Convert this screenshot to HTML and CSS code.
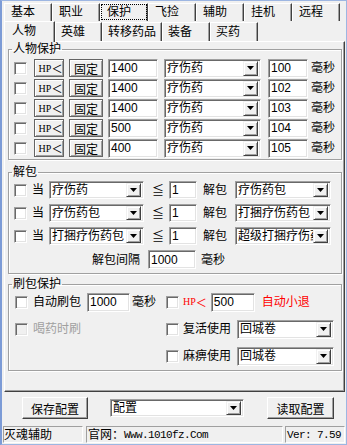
FILE: index.html
```html
<!DOCTYPE html>
<html>
<head>
<meta charset="utf-8">
<link rel="stylesheet" href="styles.css">
</head>
<body>
<div class="window">
  <div class="tabrow row1">
    <div class="tab">基本</div>
    <div class="tab">职业</div>
    <div class="tab focus">保护</div>
    <div class="tab">飞捡</div>
    <div class="tab">辅助</div>
    <div class="tab">挂机</div>
    <div class="tab">远程</div>
  </div>
  <div class="tabrow row2">
    <div class="tab2 sel">人物</div>
    <div class="tab2 t47">英雄</div>
    <div class="tab2 t60">转移药品</div>
    <div class="tab2">装备</div>
    <div class="tab2">买药</div>
  </div>
  <div class="panel">
    <fieldset class="group g1">
      <legend>人物保护</legend>
      <div class="prow">
        <span class="chk"></span><span class="btn hp">HP<span class="lt">＜</span></span><span class="btn fix">固定</span><span class="edit e50">1400</span><span class="combo c97"><span class="val">疗伤药</span><span class="drop"></span></span><span class="edit e40">100</span><span class="lbl">毫秒</span>
      </div>
      <div class="prow">
        <span class="chk"></span><span class="btn hp">HP<span class="lt">＜</span></span><span class="btn fix">固定</span><span class="edit e50">1400</span><span class="combo c97"><span class="val">疗伤药</span><span class="drop"></span></span><span class="edit e40">102</span><span class="lbl">毫秒</span>
      </div>
      <div class="prow">
        <span class="chk"></span><span class="btn hp">HP<span class="lt">＜</span></span><span class="btn fix">固定</span><span class="edit e50">1400</span><span class="combo c97"><span class="val">疗伤药</span><span class="drop"></span></span><span class="edit e40">103</span><span class="lbl">毫秒</span>
      </div>
      <div class="prow">
        <span class="chk"></span><span class="btn hp">HP<span class="lt">＜</span></span><span class="btn fix">固定</span><span class="edit e50">500</span><span class="combo c97"><span class="val">疗伤药</span><span class="drop"></span></span><span class="edit e40">104</span><span class="lbl">毫秒</span>
      </div>
      <div class="prow">
        <span class="chk"></span><span class="btn hp">HP<span class="lt">＜</span></span><span class="btn fix">固定</span><span class="edit e50">400</span><span class="combo c97"><span class="val">疗伤药</span><span class="drop"></span></span><span class="edit e40">105</span><span class="lbl">毫秒</span>
      </div>
    </fieldset>

    <fieldset class="group g2">
      <legend>解包</legend>
      <div class="urow">
        <span class="chk"></span><span class="lbl">当</span><span class="combo c95"><span class="val">疗伤药</span><span class="drop"></span></span><span class="lbl le">≦</span><span class="edit e28">1</span><span class="lbl">解包</span><span class="combo c96"><span class="val">疗伤药包</span><span class="drop"></span></span>
      </div>
      <div class="urow">
        <span class="chk"></span><span class="lbl">当</span><span class="combo c95"><span class="val">疗伤药包</span><span class="drop"></span></span><span class="lbl le">≦</span><span class="edit e28">1</span><span class="lbl">解包</span><span class="combo c96"><span class="val">打捆疗伤药包</span><span class="drop"></span></span>
      </div>
      <div class="urow">
        <span class="chk"></span><span class="lbl">当</span><span class="combo c95"><span class="val">打捆疗伤药包</span><span class="drop"></span></span><span class="lbl le">≦</span><span class="edit e28">1</span><span class="lbl">解包</span><span class="combo c96"><span class="val">超级打捆疗伤药包</span><span class="drop"></span></span>
      </div>
      <div class="irow">
        <span class="lbl">解包间隔</span><span class="edit e48">1000</span><span class="lbl ms">毫秒</span>
      </div>
    </fieldset>

    <fieldset class="group g3">
      <legend>刷包保护</legend>
      <div class="sgrid">
        <div class="cell">
          <span class="chk ml1"></span><span class="lbl ml5">自动刷包</span><span class="edit e43 ml6">1000</span><span class="lbl ml2">毫秒</span>
        </div>
        <div class="cell">
          <span class="chk"></span><span class="red hpred ml4">HP<span class="lt">＜</span></span><span class="edit e44 ml7">500</span><span class="red ml7">自动小退</span>
        </div>
        <div class="cell">
          <span class="chk dis ml1"></span><span class="lbl gray ml5">喝药时刷</span>
        </div>
        <div class="cell">
          <span class="chk"></span><span class="lbl ml4">复活使用</span><span class="combo c97 ml6"><span class="val">回城卷</span><span class="drop"></span></span>
        </div>
        <div class="cell"></div>
        <div class="cell">
          <span class="chk"></span><span class="lbl ml4">麻痹使用</span><span class="combo c97 ml6"><span class="val">回城卷</span><span class="drop"></span></span>
        </div>
      </div>
    </fieldset>
  </div>

  <div class="bottombar">
    <span class="pbtn save">保存配置</span>
    <span class="combo cfg"><span class="val">配置</span><span class="drop"></span></span>
    <span class="pbtn load">读取配置</span>
  </div>

  <div class="statusbar">
    <span class="sp sp1">灭魂辅助</span>
    <span class="sp sp2">官网：<span class="mono">Www.1010fz.Com</span></span>
    <span class="sp sp3"><span class="mono">Ver: 7.59</span></span>
  </div>
</div>
</body>
</html>
```

FILE: styles.css
```css
* { box-sizing: border-box; }
html, body { margin: 0; padding: 0; }
body {
  width: 347px;
  height: 445px;
  overflow: hidden;
  background: #f0f0f0;
  font-family: "Liberation Sans", "Noto Sans CJK SC", sans-serif;
  font-size: 12px;
  color: #000;
}
.window {
  width: 347px;
  height: 445px;
  border: 1px solid #9db6e2;
  border-left: 2px solid #7c9bd6;
  display: flex;
  flex-direction: column;
  background: #f0f0f0;
}

/* tabs */
.tabrow { display: flex; margin-left: 2px; }
.row1 { margin-top: 2px; height: 18px; }
.row2 { height: 20px; position: relative; z-index: 2; }
.tab {
  width: 48px;
  height: 18px;
  padding-left: 6px;
  line-height: 16px;
  border-left: 1px solid #fff;
  border-top: 1px solid #fff;
  border-right: 1px solid #404040;
  box-shadow: inset -1px 0 #a0a0a0;
}
.tab.focus { outline: 1px dotted #000; outline-offset: -2px; }
.tab2 {
  width: 48px;
  padding-left: 5px;
  line-height: 18px;
  border-left: 1px solid #fff;
  border-top: 1px solid #fff;
  border-right: 1px solid #404040;
  box-shadow: inset -1px 0 #a0a0a0;
  margin-top: 1px;
  height: 19px;
}
.tab2.t47 { width: 47px; }
.tab2.t60 { width: 60px; }
.tab2.sel {
  width: 51px;
  height: 21px;
  margin-top: 0;
  padding-left: 7px;
  background: #f0f0f0;
  margin-bottom: -1px;
}

/* panel */
.panel {
  flex: none;
  height: 351px;
  margin: 0 1px 0 2px;
  border: 1px solid;
  border-color: #fff #404040 #404040 #fff;
  box-shadow: inset -1px -1px #a0a0a0;
  padding: 1px 2px 0 3px;
  display: flex;
  flex-direction: column;
}
.group {
  margin: 0;
  min-width: 0;
  border: 1px solid #a0a0a0;
  box-shadow: inset 1px 1px #fff, 1px 1px #fff;
  padding: 0 0 0 5px;
}
.group legend {
  padding: 0 1px;
  margin-left: -2px;
  line-height: 13px;
  height: 13px;
  font-size: 12px;
}
.g1 { padding-top: 2px; padding-bottom: 1px; }
.g2 { margin-top: 6px; padding-top: 2px; padding-bottom: 4px; }
.g3 { margin-top: 4px; padding-top: 1px; padding-bottom: 4px; }

.prow {
  display: grid;
  grid-template-columns: 20px 35px 39px 56px 104px 43px auto;
  height: 20px;
  align-items: center;
  justify-items: start;
}
.urow {
  display: grid;
  grid-template-columns: 18px 17px 106px 14px 34px 32px auto;
  height: 18px;
  margin-bottom: 5px;
  align-items: center;
  justify-items: start;
}
.irow {
  display: flex;
  align-items: center;
  height: 19px;
  padding-left: 78px;
}
.irow .edit { margin-left: 8px; }
.irow .ms { margin-left: 5px; }

.sgrid {
  display: grid;
  grid-template-columns: 152px auto;
  grid-auto-rows: 20px;
  row-gap: 7px;
}
.cell { display: flex; align-items: center; }

.ml1 { margin-left: 1px; }
.ml2 { margin-left: 2px; }
.ml4 { margin-left: 4px; }
.ml5 { margin-left: 5px; }
.ml6 { margin-left: 6px; }
.ml7 { margin-left: 7px; }

.lbl { white-space: nowrap; line-height: 14px; }
.le {
  font-family: "Noto Sans CJK SC", sans-serif;
  font-size: 12px;
  margin-left: -3px;
}
.gray { color: #a0a0a0; }
.red { color: #f00; white-space: nowrap; line-height: 14px; }
.hpred { font-family: "Liberation Serif", serif; font-size: 10px; display: flex; align-items: center; }
.lt {
  font-family: "Noto Sans CJK SC", sans-serif;
  font-size: 11px;
  margin-right: -3px;
}

/* controls */
.chk {
  display: block;
  width: 13px;
  height: 13px;
  background: #fff;
  border: 1px solid;
  border-color: #a0a0a0 #fff #fff #a0a0a0;
  box-shadow: inset 1px 1px #696969, inset -1px -1px #e3e3e3;
}
.chk.dis { background: #f0f0f0; }

.btn {
  display: flex;
  align-items: center;
  justify-content: center;
  height: 18px;
  border: 1px solid #646464;
  box-shadow: inset 1px 1px #fff, inset -1px -1px #a0a0a0;
  background: #f0f0f0;
  white-space: nowrap;
}
.hp { width: 30px; font-family: "Liberation Serif", serif; font-size: 10px; }
.fix { width: 34px; }

.edit {
  display: flex;
  align-items: center;
  height: 19px;
  background: #fff;
  border: 1px solid;
  border-color: #a0a0a0 #fff #fff #a0a0a0;
  box-shadow: inset 1px 1px #696969, inset -1px -1px #e3e3e3;
  padding-left: 2px;
  white-space: nowrap;
}
.e50 { width: 50px; }
.e40 { width: 40px; }
.e28 { width: 28px; height: 18px; }
.e48 { width: 48px; }
.e43 { width: 43px; }
.e44 { width: 44px; }

.combo {
  display: flex;
  align-items: center;
  height: 19px;
  background: #fff;
  border: 1px solid;
  border-color: #a0a0a0 #fff #fff #a0a0a0;
  box-shadow: inset 1px 1px #696969, inset -1px -1px #e3e3e3;
  padding: 1px 2px 1px 2px;
}
.urow .combo { height: 18px; }
.c97 { width: 97px; }
.c95 { width: 95px; }
.c96 { width: 96px; }
.combo .val {
  flex: 1;
  min-width: 0;
  overflow: hidden;
  white-space: nowrap;
  line-height: 14px;
}
.drop {
  flex: none;
  width: 15px;
  height: 15px;
  display: flex;
  align-items: center;
  justify-content: center;
  background: #f0f0f0;
  border: 1px solid;
  border-color: #f0f0f0 #404040 #404040 #f0f0f0;
  box-shadow: inset 1px 1px #fff, inset -1px -1px #a0a0a0;
}
.urow .drop { height: 14px; }
.drop::after {
  content: "";
  width: 7px;
  height: 4px;
  background: #000;
  clip-path: polygon(0 0, 100% 0, 50% 100%);
}

/* bottom bar */
.bottombar {
  flex: none;
  height: 32px;
  display: flex;
  align-items: center;
  padding-left: 20px;
}
.pbtn {
  display: flex;
  align-items: center;
  justify-content: center;
  height: 22px;
  border: 1px solid;
  border-color: #fff #404040 #404040 #fff;
  box-shadow: inset -1px -1px #a0a0a0;
  background: #f0f0f0;
  font-size: 12px;
}
.save { width: 66px; }
.load { width: 67px; margin-left: 23px; }
.cfg { width: 134px; height: 18px; margin-left: 22px; }
.cfg .drop { height: 14px; }

/* status bar */
.statusbar {
  flex: none;
  display: flex;
  padding: 2px 0 0 1px;
}
.sp {
  display: flex;
  align-items: center;
  height: 17px;
  border: 1px solid;
  border-color: #a0a0a0 #fff #fff #a0a0a0;
  white-space: nowrap;
  line-height: 14px;
}
.sp1 { width: 80px; }
.sp2 { width: 197px; margin-left: 3px; padding-left: 1px; }
.sp3 { width: 60px; margin-left: 2px; padding-left: 1px; }
.mono {
  font-family: "Liberation Mono", monospace;
  font-size: 11px;
  letter-spacing: -0.6px;
}
```
